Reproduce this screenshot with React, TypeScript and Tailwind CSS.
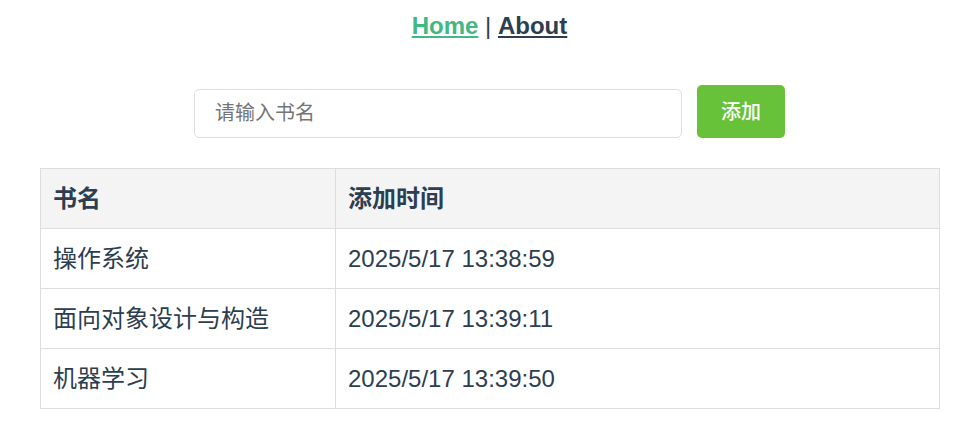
import React, { useState } from 'react';

type Book = { name: string; time: string };

const initialBooks: Book[] = [
  { name: '操作系统', time: '2025/5/17 13:38:59' },
  { name: '面向对象设计与构造', time: '2025/5/17 13:39:11' },
  { name: '机器学习', time: '2025/5/17 13:39:50' },
];

export default function App() {
  const [books, setBooks] = useState<Book[]>(initialBooks);
  const [title, setTitle] = useState('');

  const addBook = () => {
    if (!title.trim()) return;
    setBooks([...books, { name: title.trim(), time: new Date().toLocaleString('zh-CN') }]);
    setTitle('');
  };

  return (
    <div className="min-h-screen bg-white text-[#2c3e50] font-['Liberation_Sans','Noto_Sans_CJK_SC',sans-serif]">
      {/* nav */}
      <nav className="pt-3 pl-[11px] text-center text-[24px] leading-[28px]">
        <a href="#" className="font-bold text-[#42b983] underline">Home</a>
        <span> | </span>
        <a href="#" className="font-bold text-[#2c3e50] underline">About</a>
      </nav>

      {/* add form */}
      <div className="mt-[45px] flex items-end justify-center gap-[15px] pl-[11px]">
        <input
          value={title}
          onChange={(e) => setTitle(e.target.value)}
          placeholder="请输入书名"
          className="h-[49px] w-[488px] rounded-[5px] border border-[#dcdfe6] px-5 text-[20px] outline-none placeholder:text-[#757575]"
        />
        <button
          onClick={addBook}
          className="h-[53px] w-[88px] rounded-[5px] bg-[#67c23a] text-[20px] font-medium text-white"
        >
          添加
        </button>
      </div>

      {/* table */}
      <table className="ml-10 mt-[30px] w-[900px] border-collapse text-left text-[24px]">
        <thead>
          <tr className="h-[60px] bg-[#f4f4f4]">
            <th className="w-[295px] border border-[#dddddd] px-[12px] font-bold">书名</th>
            <th className="border border-[#dddddd] px-[12px] font-bold">添加时间</th>
          </tr>
        </thead>
        <tbody>
          {books.map((b) => (
            <tr key={b.name + b.time} className="h-[60px]">
              <td className="border border-[#dddddd] px-[12px]">{b.name}</td>
              <td className="border border-[#dddddd] px-[12px]">{b.time}</td>
            </tr>
          ))}
        </tbody>
      </table>
    </div>
  );
}
